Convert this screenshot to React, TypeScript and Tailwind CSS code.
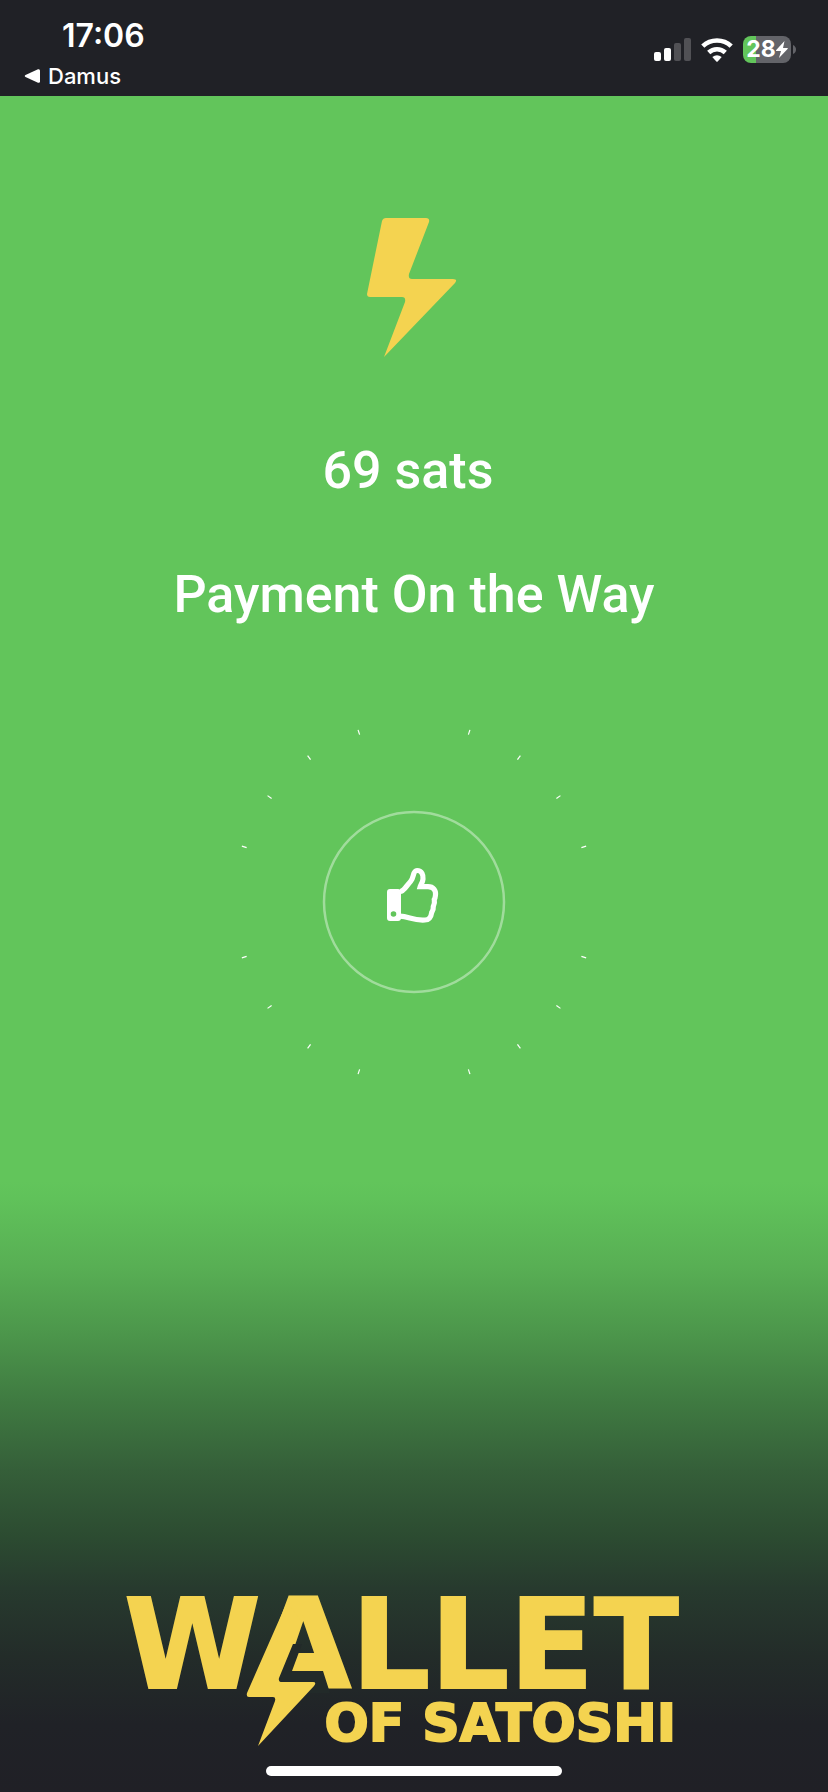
const ticks = Array.from({ length: 20 }, (_, i) => i * 18).filter((angle) => angle % 90 !== 0);

function StatusBar() {
  return (
    <header className="flex h-24 items-start justify-between bg-[#202126] pr-8 pl-6 font-['Inter','Liberation_Sans',sans-serif] text-white">
      <div className="flex flex-col pt-4">
        <time className="pl-[38px] text-[32px] leading-10 font-semibold">17:06</time>
        <a href="#damus" className="flex items-center gap-2 text-[22px] leading-10 font-medium">
          <svg width="16" height="14" viewBox="0 0 16 14" fill="currentColor" aria-hidden="true">
            <path d="M14 .3Q16-.4 16 1.800V12.200Q16 14.400 14 13.700L1.500 8Q0 7 1.500 6Z" />
          </svg>
          Damus
        </a>
      </div>
      <div className="flex items-center gap-[10px] pt-9">
        <svg width="37" height="24" viewBox="0 0 37 24" fill="white" aria-label="Signal">
          <rect x="0" y="14" width="7" height="9" rx="2" />
          <rect x="10" y="10" width="7" height="13" rx="2" />
          <rect x="20" y="5" width="7" height="18" rx="2" opacity=".22" />
          <rect x="30" y="0" width="7" height="23" rx="2" opacity=".22" />
        </svg>
        <svg width="32" height="24" viewBox="0 0 32 24" aria-label="Wi-Fi">
          <g fill="none" stroke="white" strokeWidth="4.600">
            <path d="M1.800 8.200A20.500 20.500 0 0 1 30.200 8.200" />
            <path d="M7.700 14.500A12.200 12.200 0 0 1 24.300 14.500" />
          </g>
          <path d="M11.300 19.100A7.500 7.500 0 0 1 20.700 19.100L16.700 23.400Q16 24 15.300 23.400Z" fill="white" />
        </svg>
        <div className="flex items-center gap-[2px]">
          <div className="flex h-[27px] w-12 items-center justify-center rounded-lg bg-linear-to-r from-[#62c55b] from-[27%] to-[#636469] to-[27%]">
            <span className="text-[23px] leading-[27px] font-bold">28</span>
            <svg width="12" height="17" viewBox="0 0 12 17" fill="white" aria-label="Charging">
              <path d="M8.500 0L0 9.300Q-.3 10 .6 10H5L3 17L11.800 7.800Q12.200 7 11.300 7H7Z" />
            </svg>
          </div>
          <svg width="3" height="9" viewBox="0 0 3 9" fill="#636469" aria-hidden="true">
            <path d="M0 0Q3 1.500 3 4.500T0 9Z" />
          </svg>
        </div>
      </div>
    </header>
  );
}

function SuccessBadge() {
  return (
    <svg width="364" height="364" viewBox="0 0 364 364" fill="none" aria-label="Payment accepted">
      {ticks.map((angle) => (
        <path key={angle} d="M182 1V6" stroke="white" strokeWidth="1.200" transform={`rotate(${angle} 182 182)`} />
      ))}
      <circle cx="182" cy="182" r="90" stroke="white" strokeOpacity=".4" strokeWidth="2.500" />
      <g transform="translate(138 130)">
        <path
          fill="white"
          fillRule="evenodd"
          d="M20 39H28Q31 39 31 42V68Q31 71 28 71H20Q17 71 17 68V42Q17 39 20 39ZM23.500 61.200A2.800 2.800 0 1 0 23.500 66.800A2.800 2.800 0 1 0 23.500 61.200Z"
        />
        <path
          stroke="white"
          strokeWidth="5.200"
          d="M30 41.500C34 41.500 36.500 35.500 40.500 31.500C44.500 27 42.500 20.500 47 20.500C52 20.500 53.300 25 53 29C52.800 32.500 50.800 34.500 50.200 36.700H58C63.500 36.700 66 40.500 65.500 45C65.300 47 65 48.500 64.300 49.500C64.900 52.500 64.200 54.500 63.300 56.500C63.600 59.500 62.700 61 61.700 62.500C61 67.500 59 70 55 70C43 70.800 39 66.500 30 66.200"
        />
      </g>
    </svg>
  );
}

function WalletLogo() {
  return (
    <div className="relative w-[580px] font-['DejaVu_Sans',sans-serif] font-bold text-[#f4d350]">
      <div className="text-[124px] leading-[106px] [-webkit-text-stroke:2px_#f4d350]">WALLET</div>
      <div className="pr-7 text-right text-[52px] leading-[50px] [-webkit-text-stroke:2px_#f4d350]">OF SATOSHI</div>
      <svg className="absolute top-0.5 left-[122px]" width="90" height="154" viewBox="0 0 90 154" aria-hidden="true">
        <path d="M46 50H56L46 77H77L84 99H30L24 92Z" fill="#222a29" />
        <path d="M41 8L56 28L33 84Q32 88 36 88H67Q71 88 68 92L12 152L29 107Q30 103 27 103H3Q0 103 1 99Z" fill="#f4d350" />
      </svg>
    </div>
  );
}

export default function App() {
  return (
    <div className="flex min-h-screen flex-col">
      <StatusBar />
      <main className="flex flex-1 flex-col items-center bg-[linear-gradient(to_bottom,#62c55b_0%,#62c55b_64%,#60c25a_65%,#58af54_69%,#4c964b_73%,#3f7a41_77%,#355f39_81%,#2c4b31_85%,#273a2e_88%,#232c29_92%,#202227_96%,#202026_100%)] px-4 pt-[122px] pb-4">
        <svg className="mr-1" width="90" height="140" viewBox="0 0 90 140" fill="#f4d350" aria-hidden="true">
          <path d="M19 0H59Q63 0 62 4L42 56Q41 61 45 61H86Q91 61 88 65L17 139L38 84Q39 79 35 79H3Q0 79 0 76L15 3Q16 0 19 0Z" />
        </svg>
        <div className="flex flex-col items-center gap-16 pt-[83px] text-center font-['Roboto',sans-serif] text-[52px] leading-[60px] font-medium text-white">
          <p className="pr-3">69 sats</p>
          <h1>Payment On the Way</h1>
        </div>
        <div className="pt-[95px]">
          <SuccessBadge />
        </div>
        <div className="mt-auto flex flex-col items-center gap-[18px] pt-16">
          <WalletLogo />
          <div className="h-[10px] w-[296px] rounded-full bg-white" />
        </div>
      </main>
    </div>
  );
}
